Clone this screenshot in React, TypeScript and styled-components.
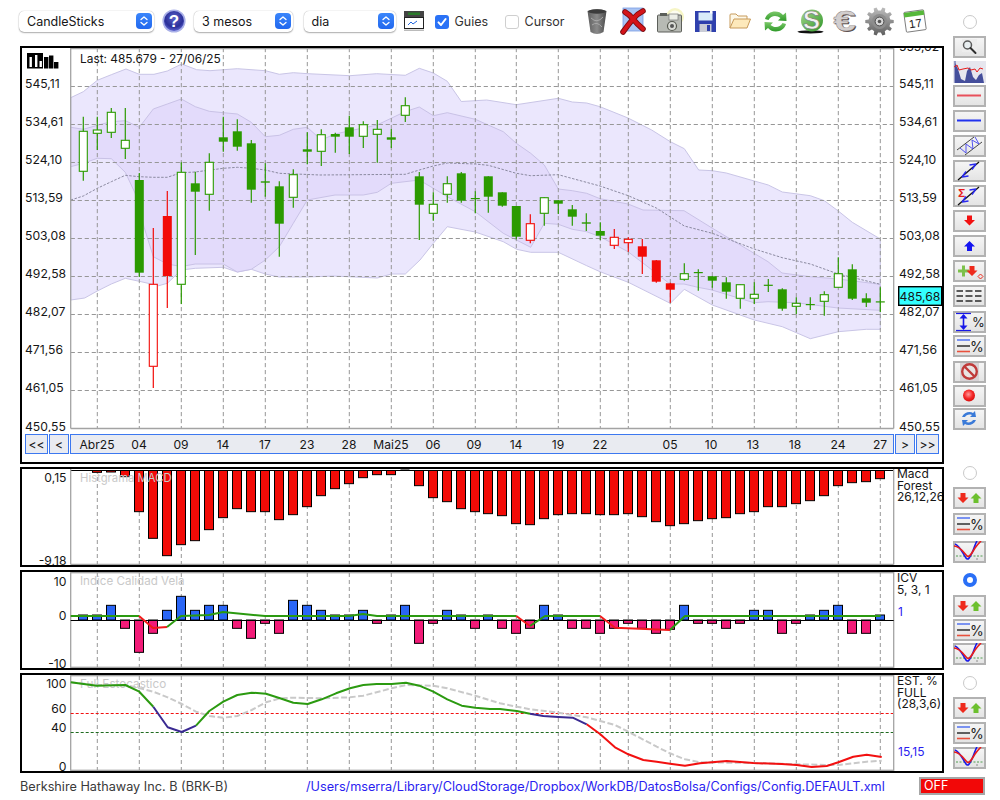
import React from "react";
import styled, { createGlobalStyle } from "styled-components";

const FONT = `Inter, "Liberation Sans", Arial, sans-serif`;

const Global = createGlobalStyle`
  html, body { margin: 0; padding: 0; background: #fff; }
  body { font-family: ${FONT}; color: #161616; overflow: hidden; }
  #root { width: 1000px; height: 800px; }
`;

const Page = styled.div`
  width: 1000px;
  height: 800px;
  display: flex;
  flex-direction: column;
  background: #fff;
  overflow: hidden;
`;
const TopRow = styled.div`
  display: flex;
  height: 773px;
  flex: none;
`;
const LeftCol = styled.div`
  width: 953px;
  flex: none;
`;
const Toolbar = styled.div`
  height: 46px;
  display: flex;
  align-items: center;
  padding-left: 19px;
`;
const Select = styled.div<{ $w: number; $ml?: number }>`
  width: ${(p) => p.$w}px;
  margin-left: ${(p) => p.$ml ?? 0}px;
  margin-top: -4px;
  height: 21px;
  flex: none;
  background: #fff;
  border-radius: 5px;
  box-shadow: 0 0 1px rgba(0, 0, 0, 0.35), 0 1px 1.5px rgba(0, 0, 0, 0.3);
  display: flex;
  align-items: center;
  justify-content: space-between;
  padding: 0 2px 0 8px;
  box-sizing: border-box;
  font-size: 12.5px;
`;
const SelectArrow = styled.span`
  width: 16px;
  height: 16px;
  border-radius: 4px;
  background: linear-gradient(#3b86fb, #2268ee);
  display: flex;
  align-items: center;
  justify-content: center;
  flex: none;
`;
const ToolIcon = styled.svg<{ $ml: number; $mt?: number }>`
  margin-left: ${(p) => p.$ml}px;
  margin-top: ${(p) => p.$mt ?? -4}px;
  flex: none;
  display: block;
  overflow: visible;
`;
const CheckBox = styled.span<{ $on?: boolean; $ml: number }>`
  width: 14px;
  height: 14px;
  margin-left: ${(p) => p.$ml}px;
  margin-top: -3px;
  box-sizing: border-box;
  border-radius: 3px;
  flex: none;
  display: flex;
  align-items: center;
  justify-content: center;
  background: ${(p) => (p.$on ? "#2a72f6" : "#fff")};
  border: ${(p) => (p.$on ? "none" : "1px solid #cfcfcf")};
`;
const CheckText = styled.span<{ $w: number }>`
  width: ${(p) => p.$w}px;
  margin-left: 6px;
  margin-top: -3px;
  flex: none;
  font-size: 12.5px;
  color: #333;
`;

const Column = styled.div`
  margin-left: 20px;
  width: 924px;
  display: flex;
  flex-direction: column;
  gap: 3px;
`;
const Panel = styled.section<{ $h: number }>`
  height: ${(p) => p.$h}px;
  box-sizing: border-box;
  border: 2px solid #000;
  background: #fff;
  display: flex;
  overflow: hidden;
`;
const MainPanel = styled(Panel)`
  flex-direction: column;
`;
const Chart = styled.svg`
  display: block;
  flex: none;
  font-family: ${FONT};
  font-size: 12.2px;
  fill: #161616;
`;
const NavRow = styled.div`
  display: flex;
  margin-top: 2px;
  padding-left: 3px;
  height: 20px;
  flex: none;
`;
const NavButton = styled.div<{ $w: number; $ml?: number }>`
  width: ${(p) => p.$w}px;
  margin-left: ${(p) => p.$ml ?? 0}px;
  box-sizing: border-box;
  flex: none;
  border: 1px solid #3c78f0;
  background: #e9ebf1;
  font-size: 12.2px;
  display: flex;
  align-items: center;
  justify-content: center;
`;
const DateBar = styled.div`
  width: 824px;
  margin-left: 1px;
  flex: none;
  box-sizing: border-box;
  border: 1px solid #3c78f0;
  background: #e9ebf1;
  font-size: 12.1px;
  display: flex;
  align-items: center;
  padding-left: 5px;
  overflow: hidden;
`;
const DateCell = styled.span<{ $w: number }>`
  width: ${(p) => p.$w}px;
  flex: none;
  text-align: center;
  white-space: nowrap;
`;
const Legend = styled.div<{ $mt?: number }>`
  width: 47px;
  flex: none;
  overflow: hidden;
  margin-top: ${(p) => p.$mt ?? 0}px;
  padding: 0 0 0 2px;
  box-sizing: border-box;
  font-size: 12px;
  line-height: 11.5px;
  white-space: nowrap;
`;
const LegendValue = styled.div<{ $mt: number }>`
  margin-top: ${(p) => p.$mt}px;
  padding-left: 1px;
  color: #2a1df0;
`;

const Sidebar = styled.aside`
  width: 33px;
  margin-left: 0;
  flex: none;
  display: flex;
  flex-direction: column;
  align-items: center;
`;
const Radio = styled.span<{ $on?: boolean; $mt: number }>`
  width: 14px;
  height: 14px;
  margin-top: ${(p) => p.$mt}px;
  box-sizing: border-box;
  border-radius: 50%;
  background: #fff;
  border: ${(p) => (p.$on ? "4px solid #2a6ff6" : "1px solid #c9c9c9")};
  flex: none;
`;
const ToolButton = styled.button<{ $mt: number; $flat?: boolean }>`
  width: 33px;
  height: 22px;
  margin: ${(p) => p.$mt}px 0 0;
  padding: 0;
  flex: none;
  box-sizing: border-box;
  border: none;
  border-radius: 0;
  background: ${(p) =>
    p.$flat ? "#e6e6ee" : "linear-gradient(#f7f7f7, #e2e2e2)"};
  box-shadow: ${(p) => (p.$flat ? "none" : "inset 0 0 0 2px #b2b2b2")};
  display: block;
  overflow: hidden;
`;
const BtnSvg = styled.svg`
  display: block;
  width: 100%;
  height: 100%;
  font-family: ${FONT};
`;

const Footer = styled.footer`
  height: 27px;
  display: flex;
  align-items: center;
  font-size: 12.7px;
  padding-left: 20px;
  padding-bottom: 1px;
  box-sizing: border-box;
`;
const StockName = styled.span`
  width: 286px;
  flex: none;
  color: #3a3a3a;
`;
const ConfigPath = styled.span`
  width: 613px;
  flex: none;
  color: #2a1df0;
  white-space: nowrap;
`;
const OffBox = styled.div`
  width: 66px;
  height: 18px;
  flex: none;
  box-sizing: border-box;
  border: 2px solid #a6a6a6;
  background: #f20808;
  color: #fff;
  font-size: 12.5px;
  line-height: 14px;
  padding-left: 3px;
`;

/* ---------- data ---------- */
type Kind = "g" | "h" | "r" | "o";
const CANDLES: [number, number, number, number, number, Kind][] = [
  [83.3, 116.7, 180.7, 131.3, 171.3, "h"],
  [97.3, 116.7, 150, 130, 133.3, "h"],
  [111.3, 108, 138, 112.3, 132.3, "h"],
  [125.3, 108, 159, 140.3, 148.3, "h"],
  [139.3, 173, 277, 180, 272.7, "g"],
  [153.3, 228, 388, 284.3, 366.3, "o"],
  [167.3, 191, 308, 216, 276, "r"],
  [181.3, 162.3, 304, 172.3, 284.3, "h"],
  [195.3, 171.7, 255, 183.3, 191.7, "g"],
  [209.3, 153.3, 210.7, 162.3, 194.3, "h"],
  [223.3, 116.7, 151.7, 137.3, 141.7, "g"],
  [237.3, 119.3, 150.7, 131.3, 146.7, "g"],
  [251.3, 140, 202.7, 143.3, 189.7, "g"],
  [265.3, 163.3, 196.7, 181.3, 182.7, "g"],
  [279.3, 181.3, 256.7, 186.3, 223.7, "g"],
  [293.3, 169.3, 207.7, 174.7, 197.3, "h"],
  [307.3, 132.3, 164.3, 149.3, 151.7, "g"],
  [321.3, 129.3, 166, 134.7, 151.3, "h"],
  [335.3, 132.7, 152.7, 134, 136.7, "g"],
  [349.3, 115.7, 154, 127.3, 136.7, "g"],
  [363.3, 121.3, 148, 124.7, 136.3, "h"],
  [377.3, 120, 162.7, 129.3, 134.3, "h"],
  [391.3, 129, 148, 137.3, 139.7, "g"],
  [405.3, 97.3, 122, 105.7, 115.3, "h"],
  [419.3, 172, 240, 176.3, 204.7, "g"],
  [433.3, 192.3, 220.7, 204.3, 213.3, "h"],
  [447.3, 176.3, 202.7, 183.7, 194.3, "h"],
  [461.3, 172, 202.7, 173.3, 200.7, "g"],
  [475.3, 191.3, 213.3, 198, 198.8, "g"],
  [488.3, 176.3, 212.7, 176.3, 196.7, "g"],
  [502.3, 192.3, 206.7, 192.3, 205.7, "g"],
  [516.3, 206, 239.3, 206, 236.7, "g"],
  [530.3, 214.3, 243.3, 223.7, 240.3, "o"],
  [544.3, 197.3, 225.7, 197.7, 213.3, "h"],
  [558.3, 200, 214, 200.3, 203.7, "g"],
  [572.3, 205, 225.7, 209.3, 216.7, "g"],
  [586.3, 213.3, 231, 222.3, 223.7, "g"],
  [600.3, 222.3, 240, 231, 235.7, "g"],
  [614.3, 229, 249, 237.3, 245.3, "o"],
  [628.3, 237.3, 251.7, 239.3, 242.7, "o"],
  [642.3, 239, 274, 246.3, 256.7, "r"],
  [656.3, 260, 282.7, 260.3, 281.7, "r"],
  [670.3, 282.7, 302.7, 283.3, 289.7, "r"],
  [684.3, 263.3, 280.7, 273.7, 279.3, "h"],
  [698.3, 269.3, 290.7, 272, 272.8, "g"],
  [712.3, 276, 287.7, 276.3, 280.7, "g"],
  [726.3, 277.3, 298.7, 282.3, 291.7, "g"],
  [740.3, 284.7, 308.7, 284.7, 298.3, "h"],
  [754.3, 282.3, 304, 294.3, 298.3, "h"],
  [768.3, 279, 292, 284.7, 285.5, "g"],
  [782.3, 288.3, 310.7, 289.3, 308.7, "g"],
  [796.3, 297.3, 314, 303.3, 306.3, "h"],
  [810.3, 297.3, 310, 304, 304.8, "g"],
  [824.3, 291.3, 315.7, 294.7, 301.3, "h"],
  [838.3, 257.3, 287.3, 273.7, 287.3, "h"],
  [852.3, 264.3, 300, 269.3, 298.7, "g"],
  [866.3, 293.3, 307, 298.3, 302.7, "g"],
  [880.3, 287.3, 312, 301.3, 302, "g"],
];

const pts = (a: number[][]) => a.map((p) => p.join(",")).join(" ");

const OUT_UP = [[70.7,97.7],[83.3,91.7],[97.3,80.3],[111.3,74.7],[126,69],[139.3,74.3],[154,74.3],[167.3,71],[181.7,64],[196.7,69.7],[210,70.7],[237.3,68.7],[265.3,70.7],[279.3,74.3],[293.3,72.7],[307.7,73.7],[350,75.7],[376.7,73.7],[405.3,75.3],[419.3,68.3],[433.3,73],[447.3,81.3],[461.3,101.5],[486.7,100],[516.3,104.7],[558.3,98.3],[572.3,102],[586.7,103],[600,106.7],[628,118],[651.7,130],[670.3,141.7],[684.3,148.7],[698.7,170],[712.3,170.7],[726.3,173],[754.3,181],[768.3,185],[782.3,192],[810.3,195.7],[824.3,200.7],[838.3,211],[852.3,222.3],[880.3,239]];
const OUT_LOW = [[70.7,300],[84.7,298],[97.3,291],[111.3,284],[125.3,278.3],[139.3,281.3],[158.7,285.7],[167.3,283.3],[181.3,270],[195.3,268.3],[223.3,267.3],[237.3,272],[251.3,269.3],[265.3,274],[279.3,277],[307.3,277],[333,276],[377.3,278],[391.3,274],[405.3,274],[420,260],[433.3,243.3],[447.3,226.7],[475.3,232],[503.3,241.7],[516.7,249.3],[530.7,252.3],[558.3,252.3],[586.7,265.7],[600,271.7],[628.3,282.3],[670.3,303.3],[684.3,289.3],[712.3,305],[754.3,320],[782.3,326.7],[810.3,338.7],[838.3,331.7],[866.3,329.3],[880.3,329.3]];
const IN_UP = [[70.7,127.3],[83.3,129.3],[97.3,125.3],[111.3,121.7],[125.3,120.7],[139.3,127.3],[153.3,109],[167.3,104],[181.3,99],[195.3,106.7],[209.3,111.3],[223.3,112.7],[237.3,114],[251.3,122.3],[265.3,136.7],[279.3,135.3],[293.3,129.3],[307.3,127.3],[321.3,140],[335,134],[363,128],[377,125],[405,111.7],[419.3,107],[433.3,115.7],[447.3,112.7],[475.3,119.3],[503.3,131.7],[516.3,143.3],[530.7,153.3],[544.3,165],[558.3,189],[572.3,190.7],[586.7,193.3],[600,198.7],[628,204],[643,210],[684,210.7],[712,228],[768,261.7],[782,273],[810,276.7],[838,279],[880,284.3]];
const IN_LOW = [[70.7,166.7],[83.3,163.3],[97.3,158.3],[111.3,158.7],[125.3,172.3],[135,193],[144,227],[153.3,256.7],[167.3,264],[181.3,266.5],[195.3,264],[223.3,264],[237.3,272],[251.3,269.3],[265.3,260],[279.3,246.7],[293.3,223.3],[307.3,200],[335,195],[363.3,195],[377.3,192.3],[391.3,183.3],[419.3,180],[433.3,188.3],[447.3,196.7],[475.3,211.7],[503.3,233.3],[530.7,247.3],[544.3,223.3],[558.3,224.3],[572.3,229.3],[586.7,231.7],[600,236.7],[628,251.7],[643,263],[670,284],[684,284],[698,287.3],[712,290],[754,302.7],[768,301.7],[796,302.7],[838,308],[880,310.3]];
const MID = [[70.7,200],[83.3,196],[97.3,188.3],[111.3,181.7],[125.3,175.3],[139.3,176.7],[153.3,177.3],[167.3,177.3],[181.3,172.7],[195.3,172],[223.3,168.3],[237.3,167.3],[251.3,168.3],[265.3,170],[279.3,173.3],[320,175],[405.3,174.3],[419.3,170],[433.3,166],[447.3,163],[475.3,164],[488.3,165.3],[516.3,173.3],[530.7,175.7],[558.3,174.7],[600,186],[628.3,195.7],[656.3,208],[684.3,226],[712.3,233.3],[754.3,249],[782.3,257.7],[810.3,264],[838.3,274],[880.3,284.3]];

const GRID_X = [97.3,139.3,181.3,223.3,265.3,307.3,349.3,391.3,433.3,475.3,516.3,558.3,600.3,628.3,670.3,712.3,754.3,796.3,838.3,880.3];
const GRID_Y = [86.5,124.5,162.5,200.5,238.5,276.5,314.5,352.5,390.5];
const PRICE_LABELS: [string, number][] = [["545,11",88],["534,61",126],["524,10",164],["513,59",202],["503,08",240],["492,58",278],["482,07",316],["471,56",354],["461,05",392],["450,55",431]];

const MACD: [number, number][] = [[97,157],[111,156],[125,170],[139,275],[153,355],[167,407],[181,374],[195,362],[209,329],[223,293],[237,266],[251,275],[265,275],[279,299],[293,284],[307,260],[321,227],[335,206],[349,191],[363,173],[377,164],[391,164],[419,197],[433,233],[447,245],[461,266],[475,275],[488,281],[502,287],[516,311],[530,314],[544,296],[558,284],[572,281],[586,281],[600,284],[614,284],[628,281],[642,290],[656,305],[670,317],[684,311],[698,302],[712,296],[726,293],[740,281],[754,275],[768,260],[782,260],[796,251],[810,242],[824,227],[838,197],[852,188],[866,185],[880,176]];
const ICV: [number, number][] = [[83,585],[97,585],[111,556],[125,625],[139,697],[153,640],[167,571],[181,529],[195,571],[209,556],[223,556],[237,625],[251,655],[265,610],[279,640],[293,541],[307,556],[321,571],[335,585],[349,585],[363,571],[377,610],[391,585],[405,556],[419,670],[433,610],[447,571],[461,585],[475,625],[488,585],[502,625],[516,640],[530,625],[544,556],[558,585],[572,625],[586,625],[600,640],[614,625],[628,610],[642,625],[656,640],[670,628],[684,556],[698,610],[712,610],[726,625],[740,610],[754,571],[768,571],[782,640],[796,610],[810,585],[824,571],[838,556],[852,640],[866,640],[880,585]];

const K1 = [[70.7,682.3],[96.7,685.7],[125.3,685],[139.3,691.7],[153.3,706.7]];
const K2 = [[153.3,706.7],[167.7,727.3],[181.7,732],[196,725.7]];
const K3 = [[196,725.7],[209.3,711],[223.3,701.7],[237.3,695],[251.7,692.7],[266,693.7],[280,698.3],[293.3,702.7],[307.7,704],[321.7,699.3],[336,693.3],[350,688.3],[363.3,685],[376.7,684],[391.7,684],[406,682.7],[419.3,685.7],[433.3,691.7],[447.3,699.3],[461.7,705.7],[475.3,707.7],[490,709],[500,709],[516.7,711],[530,713.7]];
const K4 = [[530,713.7],[543.3,716],[558.3,717],[572.7,717.7],[586.7,724.3]];
const K5 = [[586.7,724.3],[600,734],[615,747.3],[628.3,754.3],[643.3,760],[656.7,761.7],[670,763.7],[685,765.7],[700,763.3],[726.7,761],[753.3,763],[781.7,764],[796.7,765],[811.7,767],[826.7,766],[838.3,762.3],[853.3,756.7],[866.7,754.7],[881.7,757]];
const D = [[70.7,682.3],[96.7,685],[125,685],[140,688.3],[153.3,691.7],[167.7,697.3],[181.7,704],[196,711.7],[209.3,716],[223.3,717.7],[237.3,716],[251.7,710],[266,702.3],[280,698.3],[293.3,697.7],[321.7,698.3],[350,697.3],[363.3,695.7],[391.7,688.3],[406,685],[433.3,685.7],[447.3,688.3],[475.3,695.7],[500,703.3],[530,709.3],[558.3,712.7],[586.7,717.3],[615,725],[628.3,731.7],[656.7,746.7],[670,753.3],[685,759.3],[700,762.3],[753.3,763],[825,765],[838.3,765],[866.7,761.7],[881.7,760.7]];

const DATES: [string, number][] = [["Abr25",42],["04",42],["09",42],["14",42],["17",42],["23",42],["28",42],["Mai25",42],["06",42],["09",40],["14",44],["19",40],["22",44],["",27],["05",42],["10",40],["13",44],["18",40],["24",46],["27",38]];

/* ---------- chart parts ---------- */
const GRID = "#979797";
const PlotFrame = ({ top, bottom }: { top: number; bottom: number }) => (
  <rect x={70.7} y={top} width={823} height={bottom - top} fill="none" stroke="#a3a3a3" strokeWidth={1.3} />
);
const VGrid = ({ top, bottom, w = 1 }: { top: number; bottom: number; w?: number }) => (
  <g stroke={GRID} strokeWidth={w} strokeDasharray="4 3">
    {GRID_X.map((x) => <line key={x} x1={x} x2={x} y1={top} y2={bottom} />)}
  </g>
);
const Candle = ({ c }: { c: (typeof CANDLES)[number] }) => {
  const [x, wt, wb, bt, bb, k] = c;
  const col = k === "g" || k === "h" ? "#2b9a00" : "#f20b07";
  const solid = k === "g" || k === "r";
  const hw = 4;
  return (
    <g>
      <line x1={x} x2={x} y1={wt} y2={wb} stroke={col} strokeWidth={1.2} />
      {solid ? (
        <rect x={x - hw - 0.5} y={bt} width={9} height={Math.max(bb - bt, 1.2)} fill={col} />
      ) : (
        <rect x={x - hw} y={bt} width={8} height={bb - bt} fill="#fff" stroke={col} strokeWidth={1.1} />
      )}
    </g>
  );
};
const LogoBars = () => (
  <g>
    <rect x={27} y={53} width={16} height={15.5} fill="#000" />
    <rect x={29.5} y={57} width={2.4} height={10} fill="#fff" />
    <rect x={35} y={55} width={2.4} height={12} fill="#fff" />
    <rect x={39.5} y={61} width={2.4} height={6} fill="#fff" />
    <rect x={44} y={57} width={4.4} height={11.5} fill="#000" />
    <rect x={49} y={55.5} width={4.4} height={13} fill="#000" />
    <rect x={54} y={62} width={4.4} height={6.5} fill="#000" />
  </g>
);

const MainChart = () => (
  <Chart width={920} height={384} viewBox="22 48 920 384">
    <polygon points={pts([...OUT_UP, ...[...OUT_LOW].reverse()])} fill="#ebe7fd" stroke="#c9c5e6" strokeWidth={1} />
    <polygon points={pts([...IN_UP, ...[...IN_LOW].reverse()])} fill="#e3dbfb" stroke="#c9c2e6" strokeWidth={1} />
    <polyline points={pts(MID)} fill="none" stroke="#8b8aa0" strokeWidth={1} strokeDasharray="2.5 1.5" />
    <g stroke={GRID} strokeWidth={1} strokeDasharray="4.2 2.8">
      {GRID_X.map((x) => <line key={x} x1={x} x2={x} y1={48} y2={428} />)}
      {GRID_Y.map((y) => <line key={y} x1={70.7} x2={893.7} y1={y} y2={y} />)}
    </g>
    {CANDLES.map((c) => <Candle key={c[0]} c={c} />)}
    <line x1={70.7} x2={70.7} y1={48} y2={428.5} stroke="#a3a3a3" strokeWidth={1.3} />
    <line x1={893.7} x2={893.7} y1={48} y2={428.5} stroke="#a3a3a3" strokeWidth={1.3} />
    <line x1={70.7} x2={893.7} y1={428.5} y2={428.5} stroke="#a3a3a3" strokeWidth={1.3} />
    <line x1={70.7} x2={893.7} y1={48.6} y2={48.6} stroke="#a3a3a3" strokeWidth={1.3} />
    <LogoBars />
    <text x={80} y={63} fontSize={11.9}>Last: 485.679 - 27/06/25</text>
    {PRICE_LABELS.map(([t, y]) => (
      <text key={`l${t}`} x={25} y={y}>{t}</text>
    ))}
    <text x={899} y={51}>555,62</text>
    {PRICE_LABELS.map(([t, y]) => (
      <text key={`r${t}`} x={899} y={y}>{t}</text>
    ))}
    <rect x={898.7} y={286.7} width={43} height={18.6} fill="#33ffff" stroke="#000" strokeWidth={1.4} />
    <text x={920} y={301} textAnchor="middle">485,68</text>
  </Chart>
);

const MacdChart = () => (
  <Chart width={873} height={96} viewBox="22 469 873 96">
    <VGrid top={470} bottom={564} />
    {MACD.map(([x, b]) => (
      <rect key={x} x={x - 4.5} y={470.5} width={9} height={420 + b / 3 - 470.5} fill="#f20b07" stroke="#000" strokeWidth={1} />
    ))}
    <rect x={400.5} y={469.5} width={9} height={1} fill="#000" />
    <line x1={70.7} x2={893.7} y1={470.5} y2={470.5} stroke="#000" strokeWidth={1.1} />
    <line x1={70.7} x2={70.7} y1={469} y2={564.4} stroke="#a3a3a3" strokeWidth={1.3} />
    <line x1={893.7} x2={893.7} y1={469} y2={564.4} stroke="#a3a3a3" strokeWidth={1.3} />
    <line x1={70.7} x2={893.7} y1={564.4} y2={564.4} stroke="#a3a3a3" strokeWidth={1.3} />
    <text x={80} y={481.7} fontSize={11.3} fill="#c9c9c9">Histgrama MACD</text>
    <text x={66.5} y={482} textAnchor="end">0,15</text>
    <text x={66.5} y={565} textAnchor="end">-9,18</text>
  </Chart>
);

const IcvChart = () => (
  <Chart width={873} height={96} viewBox="22 572 873 96">
    <PlotFrame top={572.7} bottom={667.3} />
    <VGrid top={573} bottom={667} />
    {ICV.map(([x, v]) => {
      const y = 420 + v / 3;
      const up = y < 620;
      return (
        <rect key={x} x={x - 4.5} y={up ? y : 620} width={9} height={Math.abs(y - 620)} fill={up ? "#2a66f6" : "#f21b78"} stroke="#000" strokeWidth={1} />
      );
    })}
    <line x1={70.7} x2={893.7} y1={620.5} y2={620.5} stroke="#000" strokeWidth={1} />
    <g fill="none" strokeWidth={2} strokeLinejoin="round">
      <polyline stroke="#2b9a10" points="70.7,616 139,616" />
      <polyline stroke="#f21b1b" points="139,616 153,628 167,627" />
      <polyline stroke="#2b9a10" points="167,627 181,616 209,615 223,612 265,616 349,616 363,614 377,616 516.3,616" />
      <polyline stroke="#f21b1b" points="516.3,616 530,626" />
      <polyline stroke="#2b9a10" points="530,626 545,616 600,616" />
      <polyline stroke="#f21b1b" points="600,616 615,627.7 670,630" />
      <polyline stroke="#2b9a10" points="670,630 685,616 880.7,616" />
    </g>
    <text x={80} y={585} fontSize={11.6} fill="#c9c9c9">Indice Calidad Vela</text>
    <text x={66.5} y={585.5} textAnchor="end">10</text>
    <text x={66.5} y={620} textAnchor="end">0</text>
    <text x={66.5} y={668} textAnchor="end">-10</text>
  </Chart>
);

const EstChart = () => (
  <Chart width={873} height={96} viewBox="22 675 873 96">
    <PlotFrame top={675.7} bottom={770.3} />
    <VGrid top={676} bottom={770} />
    <line x1={70.7} x2={893} y1={713.5} y2={713.5} stroke="#f21010" strokeWidth={1} strokeDasharray="3 2" />
    <line x1={70.7} x2={893} y1={732.5} y2={732.5} stroke="#1f6b1f" strokeWidth={1} strokeDasharray="3 2" />
    <text x={80} y={687.7} fontSize={11.7} fill="#c9c9c9">Full Estocastico</text>
    <polyline points={pts(D)} fill="none" stroke="#c9c9c9" strokeWidth={2} strokeDasharray="6 2.5" />
    <g fill="none" strokeWidth={2} strokeLinejoin="round">
      <polyline points={pts(K1)} stroke="#2b9a10" />
      <polyline points={pts(K2)} stroke="#3a2a92" />
      <polyline points={pts(K3)} stroke="#2b9a10" />
      <polyline points={pts(K4)} stroke="#3a2a92" />
      <polyline points={pts(K5)} stroke="#f21010" />
    </g>
    <text x={66.5} y={688} textAnchor="end">100</text>
    <text x={66.5} y={713} textAnchor="end">60</text>
    <text x={66.5} y={732} textAnchor="end">40</text>
    <text x={66.5} y={771} textAnchor="end">0</text>
  </Chart>
);

/* ---------- sidebar icons ---------- */
const Down = ({ x, y, c = "#ee2a1c" }: { x: number; y: number; c?: string }) => (
  <polygon fill={c} points={`${x - 5.5},${y - 0.5} ${x - 2.5},${y - 0.5} ${x - 2.5},${y - 5} ${x + 2.5},${y - 5} ${x + 2.5},${y - 0.5} ${x + 5.5},${y - 0.5} ${x},${y + 5}`} />
);
const Up = ({ x, y, c = "#6cc02e" }: { x: number; y: number; c?: string }) => (
  <polygon fill={c} points={`${x - 5.5},${y + 0.5} ${x - 2.5},${y + 0.5} ${x - 2.5},${y + 5} ${x + 2.5},${y + 5} ${x + 2.5},${y + 0.5} ${x + 5.5},${y + 0.5} ${x},${y - 5}`} />
);
const Btn = ({ children }: { children: React.ReactNode }) => (
  <BtnSvg viewBox="0 0 33 22">{children}</BtnSvg>
);
const Search = () => (
  <Btn>
    <rect x={9} y={3} width={15} height={13} fill="#ededed" />
    <circle cx={14.5} cy={9} r={4} fill="#e8eef0" stroke="#5b5b5b" strokeWidth={1.5} />
    <line x1={17.5} y1={12} x2={22.5} y2={17} stroke="#2f2f2f" strokeWidth={2} strokeLinecap="round" />
  </Btn>
);
const Thumb = () => (
  <Btn>
    <polygon fill="#454f9c" points="2,22 2,2 5,8 8,18 12,20 14,10 17,6 20,16 23,19 26,14 29,12 31,22" />
    <line x1={2} x2={2} y1={0} y2={22} stroke="#454f9c" strokeWidth={1} />
    <polyline fill="none" stroke="#e81c1c" strokeWidth={1} points="1,6 4,4 6,9 10,8 15,7 18,9 22,8 24,11 27,7 30,8" />
  </Btn>
);
const HLine = ({ c }: { c: string }) => (
  <Btn><line x1={4} x2={28} y1={10.5} y2={10.5} stroke={c} strokeWidth={2} /></Btn>
);
const Channel = () => (
  <Btn>
    <line x1={4} y1={15} x2={21} y2={2} stroke="#444" strokeWidth={1} />
    <line x1={12} y1={20} x2={29} y2={7} stroke="#444" strokeWidth={1} />
    <polyline fill="none" stroke="#5252ee" strokeWidth={1} points="7,13 13,18 13,9 20,14 19,5 26,9 22,2" />
  </Btn>
);
const Trend = ({ sigma }: { sigma?: boolean }) => (
  <Btn>
    <line x1={5} y1={20} x2={26} y2={2} stroke="#111" strokeWidth={1.3} />
    <path d="M9 17l4-5.5M9 17l6.5-1" stroke="#2a2af0" strokeWidth={1.4} fill="none" />
    <path d="M23 4l-4 5.5M23 4l-6.5 1" stroke="#2a2af0" strokeWidth={1.4} fill="none" />
    {sigma && <text x={5} y={12} fontSize={10.5} fontWeight={700} fill="#e81c1c">Σ</text>}
  </Btn>
);
const PlusDown = () => (
  <Btn>
    <path d="M5 9.5h4v-4h3v4h4v3h-4v4H9v-4H5z" fill="#7cc14a" />
    <Down x={19} y={11} />
    <polygon points="27.5,14 30,16.5 27.5,19 25,16.5" fill="none" stroke="#ee2a1c" strokeWidth={1} />
  </Btn>
);
const Rows = () => (
  <Btn>
    <g stroke="#4a4a4a" strokeWidth={1.8}>
      {[6, 11, 16].map((y) => (
        <g key={y}>
          <line x1={3.5} x2={10} y1={y} y2={y} />
          <line x1={12.5} x2={19.5} y1={y} y2={y} />
          <line x1={22} x2={28.5} y1={y} y2={y} />
        </g>
      ))}
    </g>
  </Btn>
);
const Height = () => (
  <Btn>
    <g stroke="#1818e8" strokeWidth={1.2}>
      <line x1={3} x2={18} y1={2.5} y2={2.5} />
      <line x1={3} x2={18} y1={19.5} y2={19.5} />
      <line x1={10.5} x2={10.5} y1={4} y2={17} strokeWidth={1.6} />
    </g>
    <polygon fill="#1818e8" points="6.5,7.5 14.5,7.5 10.5,3" />
    <polygon fill="#1818e8" points="6.5,14.5 14.5,14.5 10.5,19" />
    <text x={19} y={15.5} fontSize={13} fill="#222">%</text>
  </Btn>
);
const Pct = () => (
  <Btn>
    <line x1={4} x2={17} y1={5} y2={5} stroke="#2a52f0" strokeWidth={1.2} />
    <line x1={4} x2={17} y1={11} y2={11} stroke="#222" strokeWidth={1.4} />
    <line x1={4} x2={17} y1={16.5} y2={16.5} stroke="#e8503c" strokeWidth={1.6} />
    <text x={17} y={17} fontSize={14} fill="#222">%</text>
  </Btn>
);
const NoEntry = () => (
  <Btn>
    <rect x={7} y={2} width={19} height={18} fill="#d8d3d6" />
    <circle cx={16.5} cy={10.5} r={7.3} fill="#e9e3e3" stroke="#bf3a3a" strokeWidth={2.4} />
    <line x1={11.5} y1={5.5} x2={21.5} y2={15.5} stroke="#bf3a3a" strokeWidth={2.4} />
  </Btn>
);
const RecDot = () => (
  <Btn>
    <defs>
      <radialGradient id="rec" cx="45%" cy="40%" r="60%">
        <stop offset="0" stopColor="#ff9a9a" />
        <stop offset="0.6" stopColor="#f42828" />
        <stop offset="1" stopColor="#d80f0f" />
      </radialGradient>
    </defs>
    <circle cx={16} cy={10.5} r={6} fill="url(#rec)" />
  </Btn>
);
const BlueSync = () => (
  <Btn>
    <path d="M9 9 C11 4 17 3 20 5 L22 3 L23 9 L17 9 L19 7 C16 6 13 7 12 9z" fill="#3a7ad8" />
    <path d="M23 12 C21 17 15 18 12 16 L10 18 L9 12 L15 12 L13 14 C16 15 19 14 20 12z" fill="#3a7ad8" />
  </Btn>
);
const Arrows = () => (
  <Btn>
    <Down x={10} y={11} />
    <Up x={23} y={11} />
  </Btn>
);
const VCurve = () => (
  <Btn>
    <line x1={3} x2={30} y1={15} y2={15} stroke="#2a8a2a" strokeWidth={0.8} strokeDasharray="2 1.5" />
    <line x1={24} x2={24} y1={17} y2={19} stroke="#777" strokeWidth={0.8} />
    <path d="M2 3 C7 5 9 11 13 17 C15 20 17 16 19 12 C21 8 22 3 24 0" fill="none" stroke="#1818e8" strokeWidth={1.6} />
    <path d="M1 5 C7 5 11 12 14 15 C16 17 19 12 22 7 C24 4 26 2 28 0" fill="none" stroke="#e81c1c" strokeWidth={1.6} />
  </Btn>
);
const BigDown = () => <Btn><Down x={16.5} y={10.5} c="#f21010" /></Btn>;
const BigUp = () => <Btn><Up x={16.5} y={11} c="#1414f0" /></Btn>;

/* ---------- toolbar icons ---------- */
const Chevrons = () => (
  <svg width={10} height={12} viewBox="0 0 10 12">
    <path d="M2 4.6 5 2l3 2.6M2 7.4 5 10l3-2.6" fill="none" stroke="#fff" strokeWidth={1.3} strokeLinecap="round" strokeLinejoin="round" />
  </svg>
);
const Tick = () => (
  <svg width={12} height={12} viewBox="0 0 12 12">
    <path d="M2.5 6.4 5 9l4.6-6" fill="none" stroke="#fff" strokeWidth={2} strokeLinecap="round" strokeLinejoin="round" />
  </svg>
);
const HelpIcon = () => (
  <ToolIcon $ml={8} width={24} height={24} viewBox="0 0 24 24">
    <defs>
      <radialGradient id="hlp" cx="50%" cy="35%" r="65%">
        <stop offset="0" stopColor="#5a62c8" />
        <stop offset="0.7" stopColor="#2a2f98" />
        <stop offset="1" stopColor="#5c63d0" />
      </radialGradient>
    </defs>
    <circle cx={12} cy={12} r={11.6} fill="#a9b0e8" />
    <circle cx={12} cy={12} r={10} fill="url(#hlp)" />
    <text x={12} y={18} textAnchor="middle" fontSize={17} fontWeight={800} fontFamily={`"Liberation Sans", sans-serif`} fill="#fff">?</text>
  </ToolIcon>
);
const ScreenIcon = () => (
  <ToolIcon $ml={8} width={20} height={20} viewBox="0 0 20 20">
    <rect x={0} y={0} width={20} height={6} fill="#444" />
    <rect x={4} y={1.5} width={12} height={2.5} fill="#2a7a2a" />
    <rect x={0.5} y={6.5} width={19} height={11} fill="#fff" stroke="#222" strokeWidth={1} />
    <polyline points="4,14 7,11 9,13 13,10" fill="none" stroke="#2266dd" strokeWidth={1} />
    <rect x={0} y={18.5} width={20} height={1.5} fill="#bbb" />
  </ToolIcon>
);
const TrashIcon = () => (
  <ToolIcon $ml={0} width={20} height={27} viewBox="0 0 20 27">
    <defs>
      <linearGradient id="tr" x1="0" x2="1" y1="0" y2="0">
        <stop offset="0" stopColor="#5f5f5f" />
        <stop offset="0.5" stopColor="#8a8a8a" />
        <stop offset="1" stopColor="#4a4a4a" />
      </linearGradient>
    </defs>
    <path d="M0.5 3 Q10 -1 19.5 3 L16.5 24 Q10 28 3.5 24z" fill="url(#tr)" />
    <ellipse cx={10} cy={3.5} rx={9} ry={2.2} fill="#3c3c3c" />
    <path d="M4 10 Q10 16 16 9 M5 17 Q10 13 15 19" stroke="#a8a8a8" strokeWidth={1} fill="none" />
  </ToolIcon>
);
const DeleteIcon = () => (
  <ToolIcon $ml={13} width={26} height={26} viewBox="0 0 26 26">
    <rect x={3} y={0} width={20} height={23} fill="#a9c4f4" stroke="#7c9fe4" strokeWidth={0.8} />
    <path d="M5 4 Q10 7 13 11 Q17 6 23 3 M13 11 Q17 16 23 21 M13 11 Q8 17 3 24" stroke="#7c0c10" strokeWidth={5.6} fill="none" strokeLinecap="round" />
    <path d="M5 4 Q10 7 13 11 Q17 6 23 3 M13 11 Q17 16 23 21 M13 11 Q8 17 3 24" stroke="#d4141a" strokeWidth={3.8} fill="none" strokeLinecap="round" />
  </ToolIcon>
);
const CameraIcon = () => (
  <ToolIcon $ml={11} width={27} height={26} viewBox="0 0 27 26">
    <circle cx={18} cy={9} r={9} fill="#f6f5c6" />
    <circle cx={18} cy={9} r={6.5} fill="#fdfdf0" />
    <rect x={0.5} y={7} width={24} height={17} rx={1} fill="#b7bab4" stroke="#5c5f5a" strokeWidth={1} />
    <rect x={3} y={5} width={7} height={3} fill="#5c5f5a" />
    <rect x={12} y={6} width={9} height={6} fill="#eceee6" stroke="#777" strokeWidth={0.7} />
    <circle cx={15} cy={18} r={4.5} fill="#d9dbd6" stroke="#55584f" strokeWidth={1.2} />
    <circle cx={15} cy={18} r={2} fill="#555" />
  </ToolIcon>
);
const FloppyIcon = () => (
  <ToolIcon $ml={11} width={21} height={21} viewBox="0 0 21 21" $mt={-4}>
    <rect x={0} y={0} width={21} height={21} fill="#2f40ad" />
    <rect x={3.5} y={1.5} width={14} height={8} fill="#d9ecfa" />
    <rect x={15} y={0} width={2.5} height={2.5} fill="#fff" />
    <rect x={4.5} y={13} width={12} height={8} fill="#c9ccd6" />
    <rect x={12} y={14} width={3} height={6} fill="#2f40ad" />
  </ToolIcon>
);
const FolderIcon = () => (
  <ToolIcon $ml={13} width={22} height={16} viewBox="0 0 22 16">
    <path d="M1 15 V2 Q1 1 2 1 H7 L9 3 H18 V6" fill="#fdf8e8" stroke="#c79a5a" strokeWidth={1} />
    <path d="M1 15 L5 6 H21.5 L18 15z" fill="#fde9bb" stroke="#c79a5a" strokeWidth={1} strokeLinejoin="round" />
  </ToolIcon>
);
const SyncIcon = () => (
  <ToolIcon $ml={13} width={23} height={23} viewBox="0 0 23 23">
    <defs>
      <linearGradient id="sy" x1="0" x2="0" y1="0" y2="1">
        <stop offset="0" stopColor="#7cc86a" />
        <stop offset="1" stopColor="#2e9a28" />
      </linearGradient>
    </defs>
    <path d="M1 9 C3 1 14 -1 19 5 L22 2.5 L22.5 11 L14 10.5 L16.5 8 C13 5 7 5 4.5 10z" fill="url(#sy)" />
    <path d="M22 14 C20 22 9 24 4 18 L1 20.5 L0.5 12 L9 12.5 L6.5 15 C10 18 16 18 18.5 13z" fill="url(#sy)" />
  </ToolIcon>
);
const CoinIcon = () => (
  <ToolIcon $ml={10} width={27} height={25} viewBox="0 0 27 25">
    <defs>
      <linearGradient id="coin" x1="0" x2="1" y1="0" y2="1">
        <stop offset="0" stopColor="#a6d98e" />
        <stop offset="1" stopColor="#2f9528" />
      </linearGradient>
    </defs>
    <ellipse cx={13.5} cy={22.8} rx={13} ry={1.6} fill="#111" />
    <circle cx={15} cy={11.5} r={11} fill="url(#coin)" />
    <text x={14.5} y={20} textAnchor="middle" fontSize={26} fontWeight={700} fontFamily={`"Liberation Sans", sans-serif`} fill="#f1f1f1" stroke="#6f7a6c" strokeWidth={0.6}>S</text>
  </ToolIcon>
);
const EuroIcon = () => (
  <ToolIcon $ml={9} width={25} height={23} viewBox="0 0 25 23">
    <g transform="translate(-9.5 -3) scale(1.7 1.2)">
      <text x={13} y={21} textAnchor="middle" fontSize={24} fontWeight={700} fontFamily={`"Liberation Sans", sans-serif`} fill="#4f4340">€</text>
      <text x={12.4} y={20} textAnchor="middle" fontSize={24} fontWeight={700} fontFamily={`"Liberation Sans", sans-serif`} fill="#d2cece" stroke="#8a8080" strokeWidth={0.3}>€</text>
    </g>
  </ToolIcon>
);
const gearPath = (cx: number, cy: number, r1: number, r2: number, n: number) => {
  const p: string[] = [];
  for (let i = 0; i < n; i++) {
    const a = (i / n) * Math.PI * 2;
    const s = (Math.PI * 2) / n;
    const at = (r: number, t: number) => `${(cx + r * Math.cos(t)).toFixed(2)},${(cy + r * Math.sin(t)).toFixed(2)}`;
    p.push(at(r1, a - s * 0.3), at(r2, a - s * 0.17), at(r2, a + s * 0.17), at(r1, a + s * 0.3));
  }
  return p.join(" ");
};
const GearIcon = () => (
  <ToolIcon $ml={7} width={29} height={29} viewBox="0 0 29 29">
    <defs>
      <linearGradient id="gr" x1="0" x2="0" y1="0" y2="1">
        <stop offset="0" stopColor="#bdbdbd" />
        <stop offset="1" stopColor="#5f5f5f" />
      </linearGradient>
    </defs>
    <polygon points={gearPath(14.5, 14.5, 11, 14.3, 10)} fill="url(#gr)" />
    <circle cx={14.5} cy={14.5} r={7.5} fill="#8d8d8d" />
    <circle cx={14.5} cy={14.5} r={4.4} fill="#d9d9d9" stroke="#4c4c4c" strokeWidth={1} />
    <circle cx={14.5} cy={14.5} r={1.8} fill="#555" />
  </ToolIcon>
);
const CalendarIcon = () => (
  <ToolIcon $ml={9} width={24} height={24} viewBox="0 0 24 24">
    <g transform="rotate(-8 12 12)">
      <rect x={2} y={2} width={20} height={20} rx={1} fill="#fff" stroke="#666" strokeWidth={0.8} />
      <path d="M2 2.5 H22 V7 H2z" fill="#57b83a" />
      <text x={12} y={18.5} textAnchor="middle" fontSize={11.5} fontFamily={`"Liberation Sans", sans-serif`} fill="#222">17</text>
    </g>
  </ToolIcon>
);

const SIDE_TOP: [React.ReactNode, number, boolean?][] = [
  [<Search />, 7],
  [<Thumb />, 3, true],
  [<HLine c="#e8505b" />, 2],
  [<HLine c="#2233ee" />, 3],
  [<Channel />, 3],
  [<Trend />, 3],
  [<Trend sigma />, 3],
  [<BigDown />, 3],
  [<BigUp />, 3],
  [<PlusDown />, 3],
  [<Rows />, 3],
  [<Height />, 4],
  [<Pct />, 2],
  [<NoEntry />, 4],
  [<RecDot />, 2],
  [<BlueSync />, 1],
];

export default function App() {
  return (
    <Page>
      <Global />
      <TopRow>
        <LeftCol>
          <Toolbar>
            <Select $w={135}>CandleSticks<SelectArrow><Chevrons /></SelectArrow></Select>
            <HelpIcon />
            <Select $w={98.5} $ml={8}>3 mesos<SelectArrow><Chevrons /></SelectArrow></Select>
            <Select $w={92} $ml={11}>dia<SelectArrow><Chevrons /></SelectArrow></Select>
            <ScreenIcon />
            <CheckBox $on $ml={11}><Tick /></CheckBox>
            <CheckText $w={50}>Guies</CheckText>
            <CheckBox $ml={0} />
            <CheckText $w={62}>Cursor</CheckText>
            <TrashIcon />
            <DeleteIcon />
            <CameraIcon />
            <FloppyIcon />
            <FolderIcon />
            <SyncIcon />
            <CoinIcon />
            <EuroIcon />
            <GearIcon />
            <CalendarIcon />
          </Toolbar>
          <Column>
            <MainPanel $h={418}>
              <MainChart />
              <NavRow>
                <NavButton $w={23}>&lt;&lt;</NavButton>
                <NavButton $w={20} $ml={1}>&lt;</NavButton>
                <DateBar>
                  {DATES.map(([t, w], i) => <DateCell key={i} $w={w}>{t}</DateCell>)}
                </DateBar>
                <NavButton $w={20} $ml={1}>&gt;</NavButton>
                <NavButton $w={23} $ml={1}>&gt;&gt;</NavButton>
              </NavRow>
            </MainPanel>
            <Panel $h={100}>
              <MacdChart />
              <Legend $mt={-1}>Macd<br />Forest<br />26,12,26</Legend>
            </Panel>
            <Panel $h={100}>
              <IcvChart />
              <Legend>ICV<br />5, 3, 1<LegendValue $mt={11}>1</LegendValue></Legend>
            </Panel>
            <Panel $h={100}>
              <EstChart />
              <Legend>EST. %<br />FULL<br />(28,3,6)<LegendValue $mt={36}>15,15</LegendValue></Legend>
            </Panel>
          </Column>
        </LeftCol>
        <Sidebar>
          <Radio $mt={15} />
          {SIDE_TOP.map(([icon, mt, flat], i) => (
            <ToolButton key={i} $mt={mt} $flat={flat}>{icon}</ToolButton>
          ))}
          <Radio $mt={36} />
          <ToolButton $mt={7}><Arrows /></ToolButton>
          <ToolButton $mt={4}><Pct /></ToolButton>
          <ToolButton $mt={6}><VCurve /></ToolButton>
          <Radio $mt={10} $on />
          <ToolButton $mt={8}><Arrows /></ToolButton>
          <ToolButton $mt={2}><Pct /></ToolButton>
          <ToolButton $mt={2}><VCurve /></ToolButton>
          <Radio $mt={11} />
          <ToolButton $mt={7}><Arrows /></ToolButton>
          <ToolButton $mt={3}><Pct /></ToolButton>
          <ToolButton $mt={3}><VCurve /></ToolButton>
        </Sidebar>
      </TopRow>
      <Footer>
        <StockName>Berkshire Hathaway Inc. B (BRK-B)</StockName>
        <ConfigPath>/Users/mserra/Library/CloudStorage/Dropbox/WorkDB/DatosBolsa/Configs/Config.DEFAULT.xml</ConfigPath>
        <OffBox>OFF</OffBox>
      </Footer>
    </Page>
  );
}
